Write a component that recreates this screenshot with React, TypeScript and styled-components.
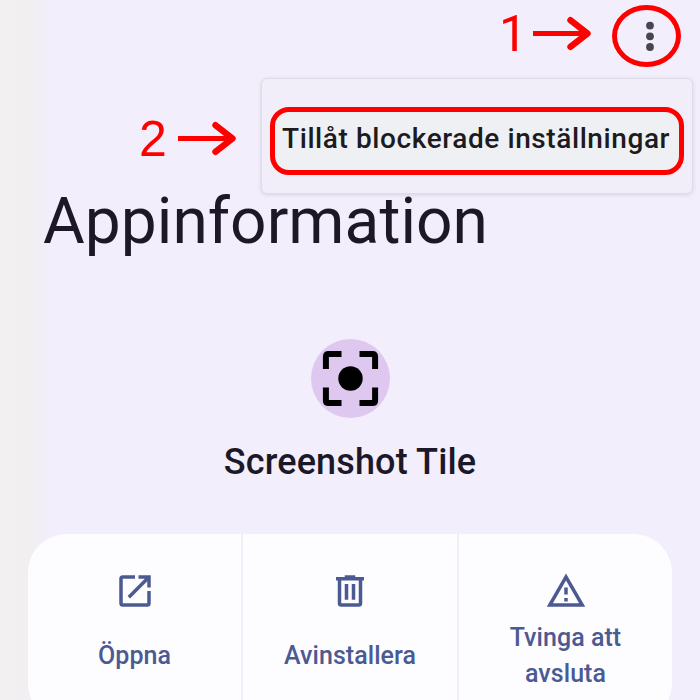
import React from 'react';
import styled, { createGlobalStyle } from 'styled-components';

const GlobalStyle = createGlobalStyle`
  * { box-sizing: border-box; }
  body { margin: 0; overflow: hidden; background: #f2eefb; }
`;

const Screen = styled.main`
  position: relative;
  width: 700px;
  height: 700px;
  overflow: hidden;
  display: flex;
  flex-direction: column;
  font-family: Roboto, sans-serif;
  color: #1c1828;
  background: linear-gradient(90deg, #f2f0f1 0, #f2eff2 30px, #f2eef8 46px, #f2eefb 52px);
`;

const Toolbar = styled.header`
  height: 72px;
  flex: none;
  display: flex;
  justify-content: flex-end;
  padding: 21px 44px 0 0;
`;

const OverflowButton = styled.button`
  width: 12px;
  height: 31px;
  padding: 0;
  border: 0;
  background: none;
  svg { display: block; }
`;

const Title = styled.h1`
  margin: 112px 0 0 43px;
  height: 76px;
  flex: none;
  font-size: 64px;
  line-height: 76px;
  font-weight: 400;
  letter-spacing: 0.05px;
  white-space: nowrap;
`;

const AppHeader = styled.section`
  flex: none;
  height: 274px;
  padding-top: 79px;
  display: flex;
  flex-direction: column;
  align-items: center;
`;

const AppIcon = styled.div`
  width: 79px;
  height: 79px;
  border-radius: 50%;
  background: #dfc8ef;
  svg { display: block; }
`;

const AppName = styled.h2`
  margin: 23px 0 0;
  font-size: 36px;
  line-height: 42px;
  font-weight: 500;
  letter-spacing: 0.15px;
`;

const Actions = styled.section`
  flex: none;
  width: 644px;
  height: 188px;
  margin-left: 28px;
  display: grid;
  grid-template-columns: 213px 214px 213px;
  column-gap: 2px;
  border-radius: 38px;
  overflow: hidden;
  background: #f2effa;
`;

const Action = styled.button`
  display: flex;
  flex-direction: column;
  align-items: center;
  padding: 36px 0 0;
  border: 0;
  background: #fdfcff;
  color: #4c5a92;
  font-family: inherit;
  svg { display: block; flex: none; }
`;

const ActionLabel = styled.span`
  display: flex;
  align-items: center;
  justify-content: center;
  width: 150px;
  height: 72px;
  margin-top: 8px;
  font-size: 25px;
  line-height: 36px;
  font-weight: 500;
  letter-spacing: 0.05px;
  text-align: center;
`;

const Menu = styled.div`
  position: absolute;
  left: 261px;
  top: 78px;
  width: 432px;
  height: 116px;
  padding: 28px 8px 0;
  border: 1px solid #dfdce7;
  border-radius: 6px;
  background: #f2eef9;
  box-shadow: 0 1px 4px rgba(70, 60, 100, 0.14);
`;

const MenuItem = styled.div`
  width: 414px;
  height: 68px;
  border: 5px solid #ff0000;
  border-radius: 19px;
  background: #eff0f3;
  display: flex;
  align-items: center;
  padding: 0 0 6px 7px;
  color: #1c1b20;
  font-size: 28px;
  font-weight: 500;
  letter-spacing: 0.59px;
  white-space: nowrap;
`;

const Step = styled.div<{ $x: number; $y: number; $font: string }>`
  position: absolute;
  left: ${(p) => p.$x}px;
  top: ${(p) => p.$y}px;
  display: flex;
  align-items: center;
  height: 50px;
  color: #ff0000;
  font: 50px/50px ${(p) => p.$font}, sans-serif;
`;

const StepNumber = styled.span<{ $width: number }>`
  width: ${(p) => p.$width}px;
`;

const Ring = styled.div`
  position: absolute;
  left: 612px;
  top: 5px;
  width: 69px;
  height: 62px;
  border: 5px solid #ff0000;
  border-radius: 50%;
`;

const Arrow = () => (
  <svg width="60" height="36" viewBox="0 0 60 36" fill="none" stroke="#ff0000" strokeWidth="5">
    <path d="M0 17.5H54" />
    <path d="M37.5 4.2L54.5 17.5L37.5 30.8" strokeWidth="6.4" strokeLinecap="round" strokeLinejoin="round" />
  </svg>
);

const OpenIcon = () => (
  <svg width="42" height="42" viewBox="0 0 24 24" fill="currentColor">
    <path d="M19 19H5V5h7V3H5a2 2 0 0 0-2 2v14a2 2 0 0 0 2 2h14a2 2 0 0 0 2-2v-7h-2z" />
    <path d="M14 3v2h3.59l-9.83 9.83 1.41 1.41L19 6.41V10h2V3z" />
  </svg>
);

const TrashIcon = () => (
  <svg width="42" height="42" viewBox="0 0 24 24" fill="currentColor">
    <path d="M9 3h6v1h5v2h-1v13a2 2 0 0 1-2 2H7a2 2 0 0 1-2-2V6H4V4h5zM7 6v13h10V6zM9 8h2v9H9zM13 8h2v9h-2z" fillRule="evenodd" />
  </svg>
);

const WarningIcon = () => (
  <svg width="42" height="42" viewBox="0 0 24 24" fill="currentColor">
    <path d="M12 2 23 21H1zM12 6 4.5 19h15zM11 10h2v4h-2zM11 16h2v2h-2z" fillRule="evenodd" />
  </svg>
);

export default function App() {
  return (
    <>
      <GlobalStyle />
      <Screen>
        <Toolbar>
          <OverflowButton aria-label="Fler alternativ">
            <svg width="12" height="31" fill="#48454e">
              <circle cx="6" cy="4.6" r="3.9" />
              <circle cx="6" cy="15.3" r="3.9" />
              <circle cx="6" cy="26" r="3.9" />
            </svg>
          </OverflowButton>
        </Toolbar>
        <Title>Appinformation</Title>
        <AppHeader>
          <AppIcon>
            <svg width="79" height="79" viewBox="0 0 79 79">
              <circle cx="39.5" cy="39.5" r="12.2" />
              <path d="M14.9 30V17.5Q14.9 14.9 17.5 14.9H30.5M48.5 14.9H61.5Q64.1 14.9 64.1 17.5V30M64.1 48.5V61.5Q64.1 64.1 61.5 64.1H48.5M30.5 64.1H17.5Q14.9 64.1 14.9 61.5V48.5" fill="none" stroke="#000" strokeWidth="6" />
            </svg>
          </AppIcon>
          <AppName>Screenshot Tile</AppName>
        </AppHeader>
        <Actions>
          <Action><OpenIcon /><ActionLabel>Öppna</ActionLabel></Action>
          <Action><TrashIcon /><ActionLabel>Avinstallera</ActionLabel></Action>
          <Action><WarningIcon /><ActionLabel>Tvinga att<br />avsluta</ActionLabel></Action>
        </Actions>
        <Menu role="menu"><MenuItem role="menuitem">Tillåt blockerade inställningar</MenuItem></Menu>
        <Step $x={499} $y={9} $font="Roboto"><StepNumber $width={34}>1</StepNumber><Arrow /></Step>
        <Step $x={139} $y={114} $font='"Liberation Sans"'><StepNumber $width={39}>2</StepNumber><Arrow /></Step>
        <Ring />
      </Screen>
    </>
  );
}
